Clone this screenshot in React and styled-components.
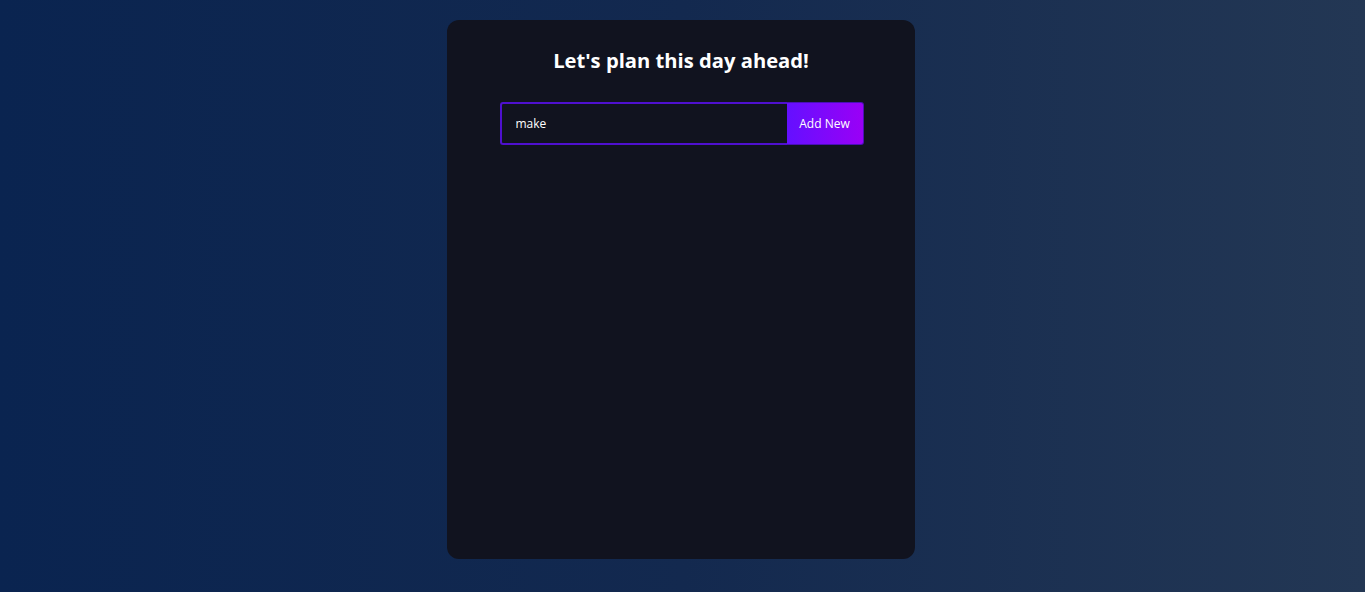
import React, { useState } from "react";
import styled, { createGlobalStyle } from "styled-components";

const Global = createGlobalStyle`
  * { box-sizing: border-box; }
  html, body { margin: 0; padding: 0; }
  body {
    min-height: 592px;
    background: linear-gradient(90deg, #0a2450 0%, #13294f 50%, #233754 100%);
    font-family: "Open Sans", "DejaVu Sans", sans-serif;
  }
`;

const Page = styled.div`
  min-height: 592px;
  display: flex;
  justify-content: center;
  align-items: flex-start;
  padding: 20px 3px 0 0;
`;

const Card = styled.div`
  width: 468px;
  height: 539px;
  background: #11131f;
  border-radius: 12px;
  display: flex;
  flex-direction: column;
  align-items: center;
  padding-top: 24px;
`;

const Title = styled.h1`
  margin: 0;
  color: #ffffff;
  font-size: 20.2px;
  font-weight: 700;
  line-height: 32px;
  letter-spacing: 0;
`;

const Form = styled.form`
  display: flex;
  margin-top: 26px;
  margin-left: 1px;
  width: 364px;
  height: 43px;
`;

const Input = styled.input`
  flex: 1;
  min-width: 0;
  height: 100%;
  background: transparent;
  border: 2px solid #4f10cf;
  border-right: none;
  border-radius: 3px 0 0 3px;
  padding: 0 14px;
  color: #ffffff;
  font-family: "Open Sans", "DejaVu Sans", sans-serif;
  font-size: 12px;
  outline: none;
  caret-color: #ffffff;
`;

const Button = styled.button`
  width: 77px;
  height: 100%;
  border: 1px solid #4a0fb8;
  border-left: none;
  border-radius: 0 3px 3px 0;
  background: linear-gradient(90deg, #6410ff 0%, #9a00f6 100%);
  color: #ffffff;
  font-family: "Open Sans", "DejaVu Sans", sans-serif;
  font-size: 12px;
  cursor: pointer;
  padding: 0;
`;

export default function App() {
  const [value, setValue] = useState("make");
  return (
    <>
      <Global />
      <Page>
        <Card>
          <Title>Let's plan this day ahead!</Title>
          <Form onSubmit={(e) => e.preventDefault()}>
            <Input value={value} onChange={(e) => setValue(e.target.value)} />
            <Button type="submit">Add New</Button>
          </Form>
        </Card>
      </Page>
    </>
  );
}
